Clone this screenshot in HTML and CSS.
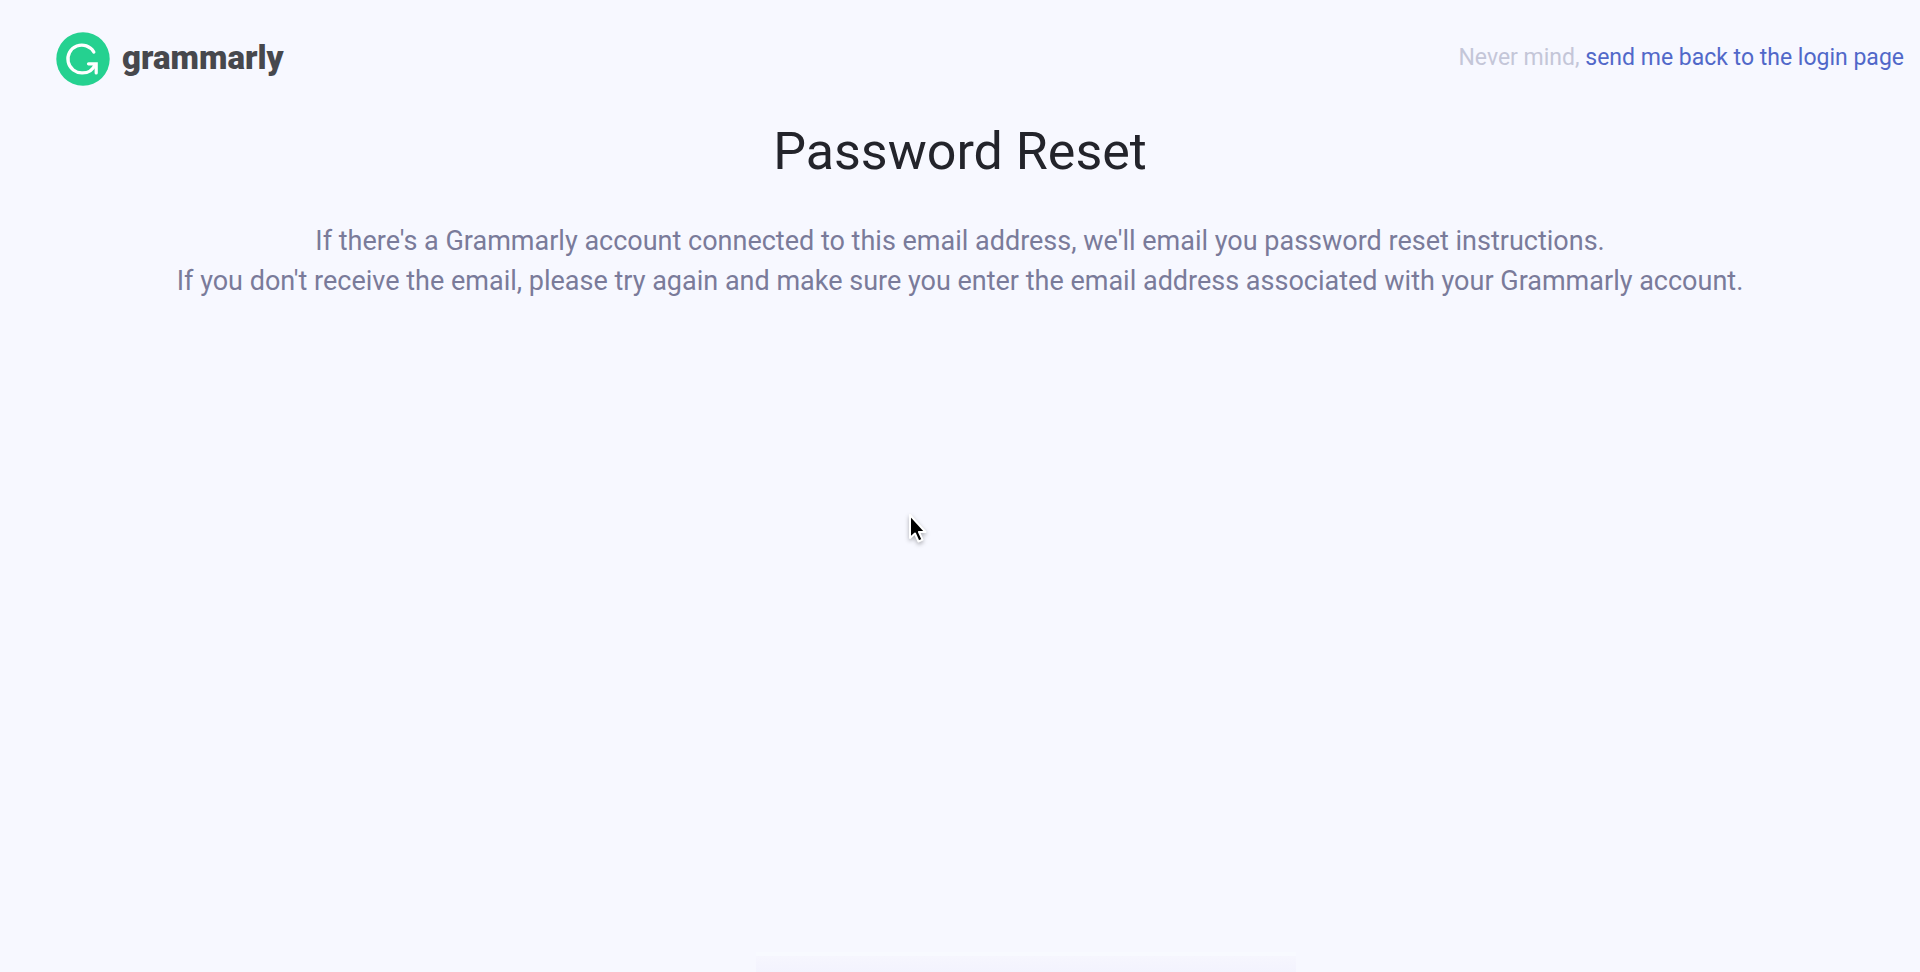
FILE: index.html
```html
<!DOCTYPE html>
<html lang="en">
<head>
<meta charset="utf-8">
<title>Password Reset</title>
<link rel="stylesheet" href="styles.css">
</head>
<body>
<header class="header">
  <a class="brand" href="#">
    <svg class="brand-mark" viewBox="0 0 54 54" aria-hidden="true">
      <circle cx="27" cy="27" r="26.700" fill="#25d190"/>
      <path d="M37.800 20A13.900 13.900 0 1 0 26.500 40.900C32.500 40.900 37 37.500 39 32.800" fill="none" stroke="#fff" stroke-width="3.300" stroke-linecap="round"/>
      <path d="M32.500 31.800H40.200V41" fill="none" stroke="#fff" stroke-width="3.200" stroke-linecap="round" stroke-linejoin="miter"/>
    </svg>
    <span class="brand-name">grammarly</span>
  </a>
  <p class="back">Never mind, <a class="back-link" href="#">send me back to the login page</a></p>
</header>
<main class="content">
  <h1 class="title">Password Reset</h1>
  <p class="message">If there's a Grammarly account connected to this email address, we'll email you password reset instructions.<br>If you don't receive the email, please try again and make sure you enter the email address associated with your Grammarly account.</p>
</main>
<svg class="cursor" viewBox="0 0 20 32" aria-hidden="true">
  <path d="M2 2V25L7 20.500L10.500 28.500L14.500 26.700L11 19H17.500Z" fill="#000" stroke="#fff" stroke-width="2" stroke-linejoin="round"/>
</svg>
<div class="bottom-glow"></div>
</body>
</html>
```
FILE: styles.css
```css
* { box-sizing: border-box; }
body {
  margin: 0;
  min-height: 100vh;
  position: relative;
  overflow: hidden;
  background: #f7f8ff;
  font-family: Roboto, "Liberation Sans", sans-serif;
}
.header {
  display: flex;
  align-items: flex-start;
  justify-content: space-between;
  padding: 32px 16px 0 56px;
}
.brand {
  display: flex;
  align-items: flex-start;
  gap: 12px;
  color: #47484d;
  text-decoration: none;
}
.brand-mark { width: 54px; height: 54px; }
.brand-name {
  font-size: 33px;
  line-height: 52px;
  font-weight: 900;
}
.back {
  margin: 0;
  color: #c4c6d8;
  font-size: 23px;
  line-height: 52px;
}
.back-link { color: #5168c9; text-decoration: none; }
.content { padding: 34px 24px 0; text-align: center; }
.title {
  margin: 0;
  color: #23242b;
  font-size: 52px;
  line-height: 64px;
  font-weight: 400;
}
.message {
  margin: 37px 0 0;
  color: #7a7b9a;
  font-size: 27px;
  line-height: 40px;
}
.cursor {
  position: absolute;
  left: 908px;
  top: 513px;
  width: 20px;
  height: 32px;
  filter: drop-shadow(0 2px 2px rgba(0, 0, 0, 0.3));
}
.bottom-glow {
  position: absolute;
  left: 756px;
  right: 624px;
  bottom: 0;
  height: 20px;
  border-top: 4px solid #f8faff;
  background: linear-gradient(#f6f6fe, #f3f3fe);
}
```
